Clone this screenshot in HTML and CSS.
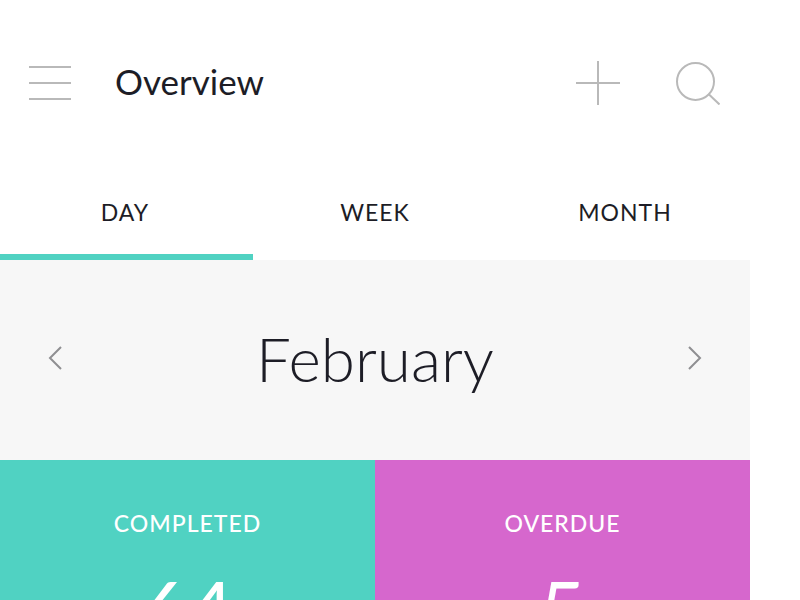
FILE: index.html
```html
<!DOCTYPE html>
<html lang="en">
<head>
<meta charset="utf-8">
<meta name="viewport" content="width=device-width, initial-scale=1">
<title>Overview</title>
<link rel="stylesheet" href="styles.css">
</head>
<body>
<div class="app">
  <header class="bar">
    <button class="icon-button" type="button" aria-label="Menu">
      <svg width="44" height="44" viewBox="0 0 44 44"><path d="M1 6H43M1 22H43M1 38H43"/></svg>
    </button>
    <h1 class="title">Overview</h1>
    <button class="icon-button" type="button" aria-label="Add">
      <svg width="44" height="44" viewBox="0 0 44 44"><path d="M0 22H44M22 0V44"/></svg>
    </button>
    <button class="icon-button" type="button" aria-label="Search">
      <svg width="44" height="44" viewBox="0 0 44 44"><circle cx="19.5" cy="20.5" r="18.5"/><path d="M32.5 33L43.5 43.5"/></svg>
    </button>
  </header>
  <nav class="tabs">
    <a class="tab tab-active" href="#day">DAY</a>
    <a class="tab" href="#week">WEEK</a>
    <a class="tab" href="#month">MONTH</a>
  </nav>
  <section class="period">
    <button class="arrow" type="button" aria-label="Previous month">
      <svg width="14" height="24" viewBox="0 0 14 24"><path d="M13 1L2 12L13 23"/></svg>
    </button>
    <h2 class="month">February</h2>
    <button class="arrow" type="button" aria-label="Next month">
      <svg width="14" height="24" viewBox="0 0 14 24"><path d="M1 1L12 12L1 23"/></svg>
    </button>
  </section>
  <section class="stats">
    <div class="stat completed"><h3 class="label">COMPLETED</h3><p class="value">64</p></div>
    <div class="stat overdue"><h3 class="label">OVERDUE</h3><p class="value">5</p></div>
  </section>
</div>
</body>
</html>
```
FILE: styles.css
```css
* { box-sizing: border-box; }

body {
  margin: 0;
  height: 100vh;
  overflow: hidden;
  background: #fff;
  color: #1d1d26;
  font-family: Lato, "Liberation Sans", sans-serif;
}

h1, h2, h3, p { margin: 0; font-weight: 400; }

button {
  padding: 0;
  border: 0;
  background: none;
  cursor: pointer;
}

svg {
  display: block;
  fill: none;
  stroke: #b9b9b9;
  stroke-width: 2;
}

.app { margin-right: 50px; }

.bar {
  display: flex;
  align-items: center;
  gap: 56px;
  padding: 61px 30px 61px 28px;
}

.title {
  flex: 1;
  margin-left: -13px;
  padding-bottom: 4px;
  font-size: 35px;
  line-height: 40px;
}

.tabs {
  display: grid;
  grid-template-columns: repeat(3, 1fr);
}

.tab {
  position: relative;
  padding: 31px 0 33px;
  color: inherit;
  font-size: 23px;
  line-height: 30px;
  letter-spacing: 1px;
  text-align: center;
  text-decoration: none;
}

.tab-active::after {
  content: "";
  position: absolute;
  left: 0;
  right: -3px;
  bottom: 0;
  height: 6px;
  background: #50d2c2;
}

.period {
  display: flex;
  align-items: center;
  justify-content: space-between;
  padding: 58px 48px 62px;
  background: #f7f7f7;
}

.arrow svg { stroke: #8f8f92; }

.month {
  font-size: 62px;
  font-weight: 300;
  line-height: 80px;
}

.stats {
  display: grid;
  grid-template-columns: repeat(2, 1fr);
  color: #fff;
  text-align: center;
}

.stat { padding: 48px 0 50px; }

.completed { background: #50d2c2; }
.overdue { background: #d667cd; }

.label {
  font-size: 23px;
  font-weight: 500;
  line-height: 30px;
  letter-spacing: 1px;
}

.value {
  margin-top: 20px;
  font-size: 80px;
  line-height: 100px;
}
```
